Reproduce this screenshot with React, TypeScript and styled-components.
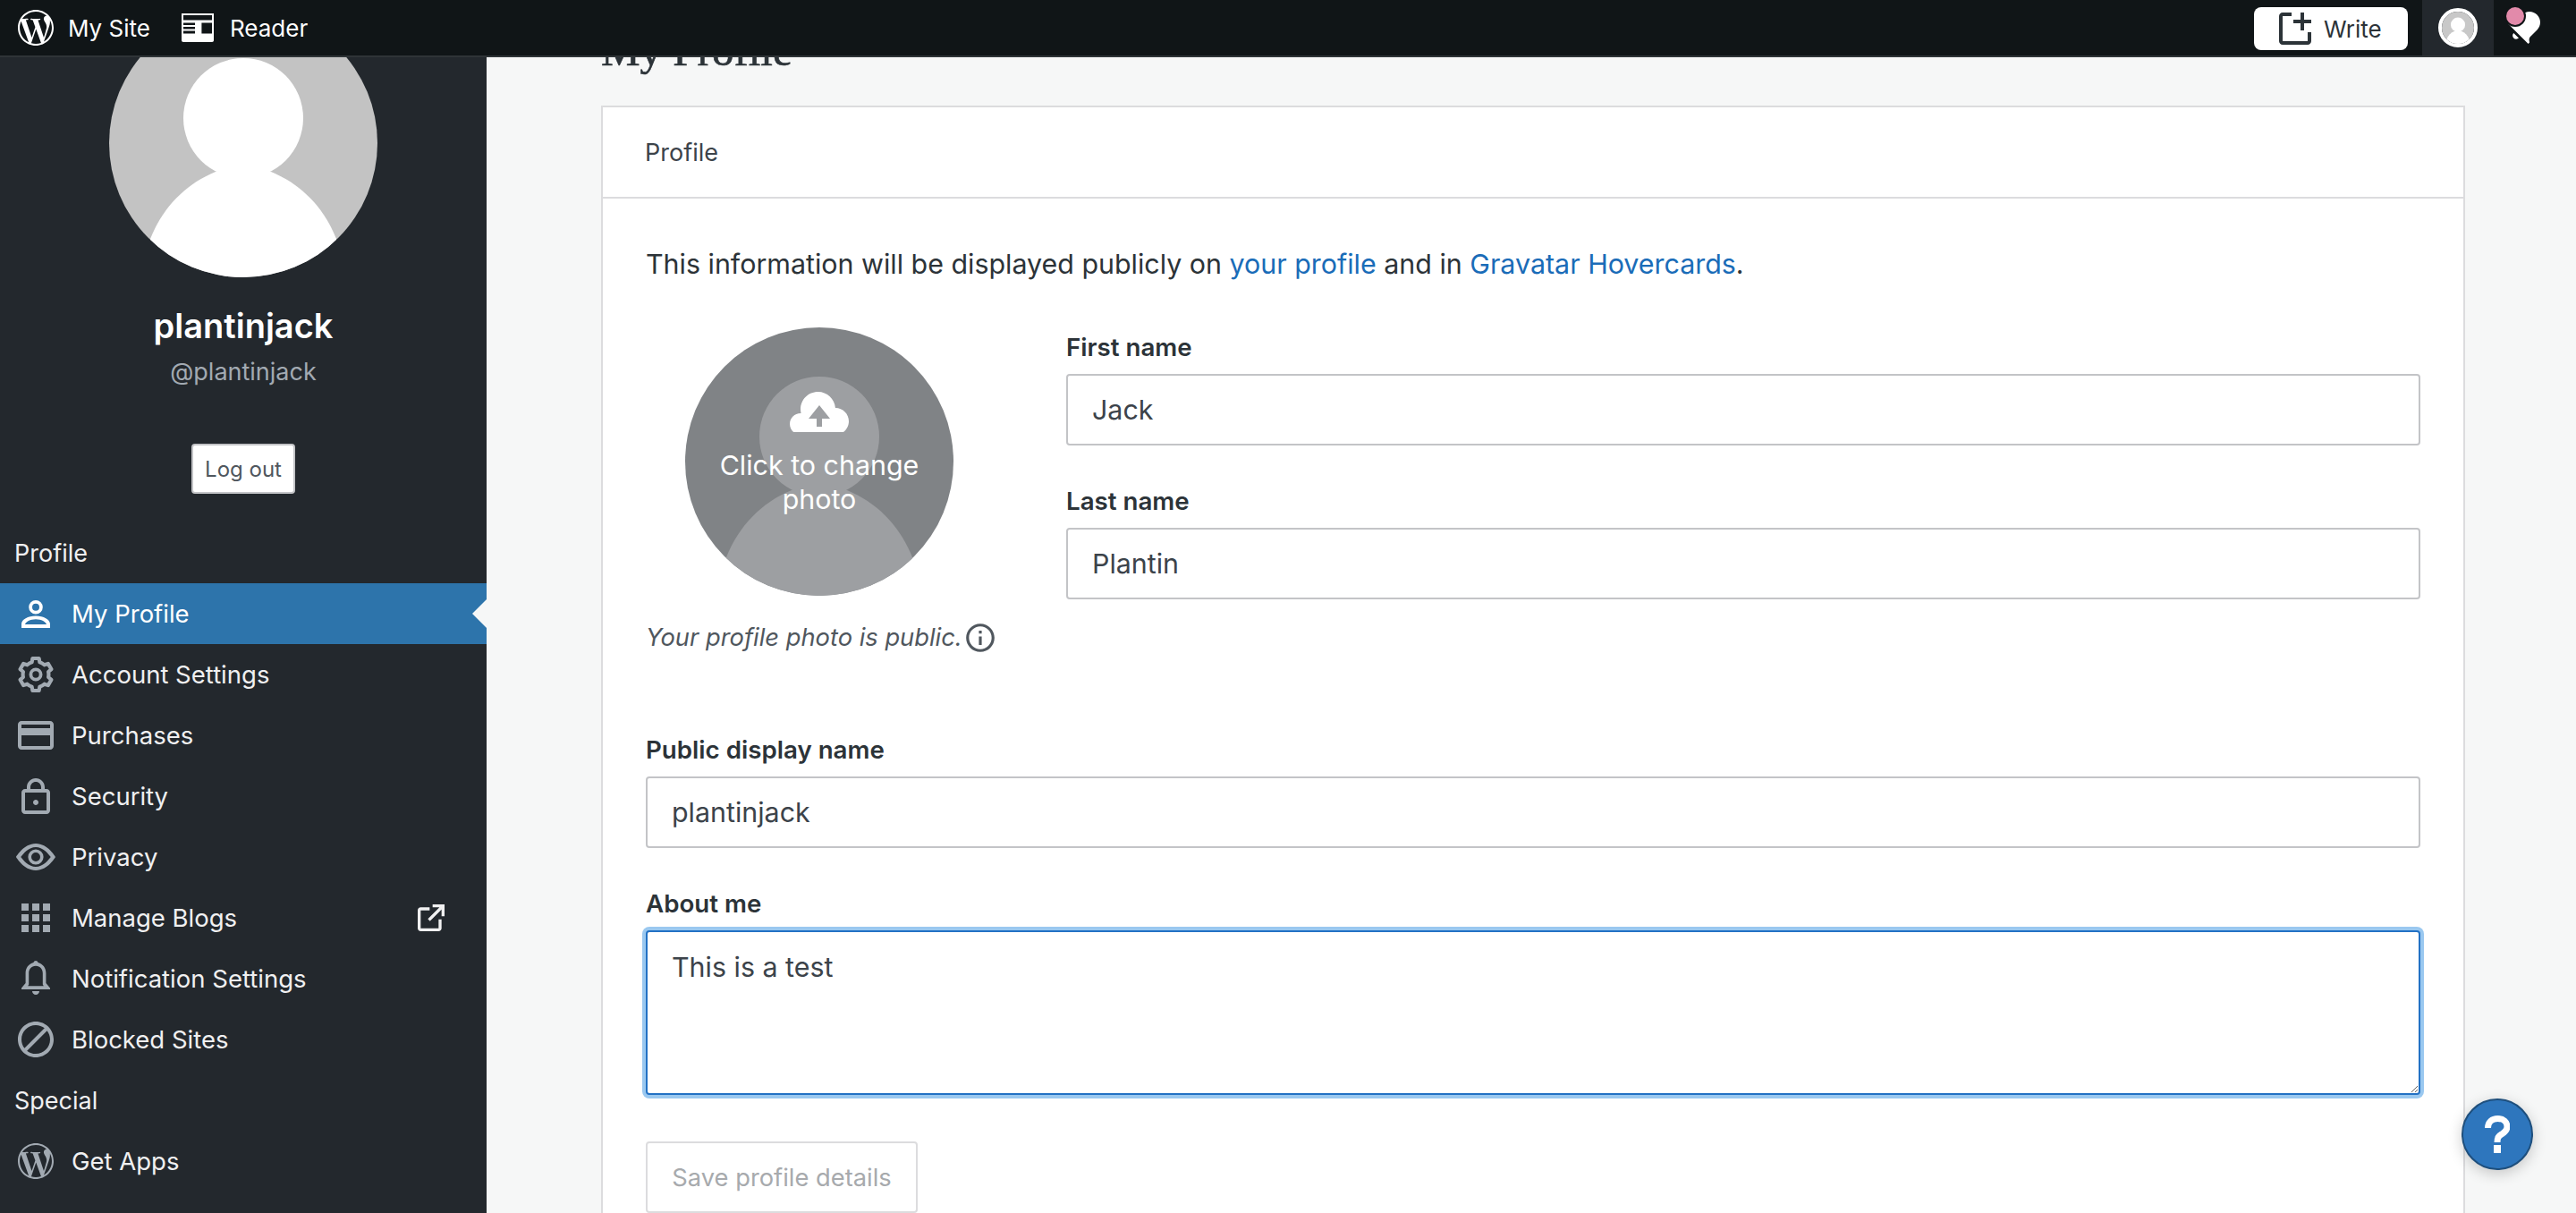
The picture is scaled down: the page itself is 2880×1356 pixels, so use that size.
import React from 'react';
import styled, {createGlobalStyle} from 'styled-components';
import {SiWordpress} from 'react-icons/si';

const GlobalStyle = createGlobalStyle`
  html, body {
    margin: 0;
    padding: 0;
    background-color: #f6f7f7;
    font-family: Inter, "Liberation Sans", sans-serif;
  }
  * {
    box-sizing: border-box;
  }
`;

const Icon = ({size = 48, children}: {size?: number; children: React.ReactNode}) => (
    <svg width={size} height={size} viewBox='0 0 24 24' fill='currentColor' style={{display: 'block', flexShrink: 0}}>
        {children}
    </svg>
);

const GEAR = 'M20 12c0-.568-.061-1.122-.174-1.656l1.834-1.612-2-3.464-2.322.786c-.828-.747-1.811-1.326-2.896-1.676L14 2h-4l-.442 2.378c-1.085.35-2.068.929-2.896 1.676l-2.322-.786-2 3.464 1.834 1.612C4.061 10.878 4 11.432 4 12s.061 1.122.174 1.656L2.34 15.268l2 3.464 2.322-.786c.828.747 1.811 1.326 2.896 1.676L10 22h4l.442-2.378c1.085-.35 2.068-.929 2.896-1.676l2.322.786 2-3.464-1.834-1.612C19.939 13.122 20 12.568 20 12z';

const UserIcon = () => (
    <Icon>
        <path fillRule='evenodd' d='M12 4.500a3.900 3.900 0 1 0 0 7.800 3.900 3.900 0 0 0 0-7.800zm0 1.900a2 2 0 1 1 0 4 2 2 0 0 1 0-4z'/>
        <path fillRule='evenodd' d='M4 20v-2.200c0-2.600 3.600-4.600 8-4.600s8 2 8 4.600V20H4zm2-2h12c-.3-1.500-2.900-2.900-6-2.900S6.300 16.500 6 18z'/>
    </Icon>
);

const CogIcon = () => (
    <Icon>
        <g transform='translate(12 12) scale(.9) translate(-12 -12)'>
            <path d={GEAR} fill='none' stroke='currentColor' strokeWidth='2.3' strokeLinejoin='round'/>
        </g>
        <circle cx='12' cy='12' r='2.800' fill='none' stroke='currentColor' strokeWidth='1.900'/>
    </Icon>
);

const CardIcon = () => (
    <Icon>
        <path d='M20 4H4c-1.105 0-2 .895-2 2v12c0 1.105.895 2 2 2h16c1.105 0 2-.895 2-2V6c0-1.105-.895-2-2-2zm0 14H4v-6h16v6zm0-10H4V6h16v2z'/>
    </Icon>
);

const LockIcon = () => (
    <Icon>
        <path d='M18 8h-1V7c0-2.757-2.243-5-5-5S7 4.243 7 7v1H6c-1.105 0-2 .895-2 2v10c0 1.105.895 2 2 2h12c1.105 0 2-.895 2-2V10c0-1.105-.895-2-2-2zM9 7c0-1.654 1.346-3 3-3s3 1.346 3 3v1H9V7zm9 13H6V10h12v10zm-6-3c.828 0 1.500-.672 1.500-1.500S12.828 14 12 14s-1.500.672-1.500 1.500.672 1.500 1.500 1.500z'/>
    </Icon>
);

const EyeIcon = () => (
    <Icon>
        <g transform='translate(0 12) scale(1 1.25) translate(0 -12)'>
            <path fillRule='evenodd' d='M12 6C5.188 6 1 12 1 12s4.188 6 11 6 11-6 11-6-4.188-6-11-6zm0 10.400c-3.943 0-6.926-2.884-8.379-4.400C5.074 10.484 8.057 7.600 12 7.600s6.926 2.884 8.379 4.400c-1.453 1.516-4.436 4.400-8.379 4.400z'/>
        </g>
        <circle cx='12' cy='12' r='3.400' fill='none' stroke='currentColor' strokeWidth='1.800'/>
    </Icon>
);

const GridIcon = () => (
    <Icon>
        <path d='M4 4h4v4H4zM10 4h4v4h-4zM16 4h4v4h-4zM4 10h4v4H4zM10 10h4v4h-4zM16 10h4v4h-4zM4 16h4v4H4zM10 16h4v4h-4zM16 16h4v4h-4z'/>
    </Icon>
);

const BellIcon = () => (
    <Icon>
        <path fillRule='evenodd' d='M12 2a1.400 1.400 0 0 0-1.300 1C8 3.800 6.300 6 6.300 9v5.500L4 17.200V18h16v-.8l-2.300-2.700V9c0-3-1.700-5.200-4.400-6A1.400 1.400 0 0 0 12 2zm0 2.900c2.500 0 3.900 1.900 3.900 4.100v6.200l.5.900H7.600l.5-.9V9c0-2.200 1.400-4.100 3.900-4.100z'/>
        <path d='M10 19h4c0 1-.9 2-2 2s-2-1-2-2z'/>
    </Icon>
);

const BlockIcon = () => (
    <Icon>
        <path d='M12 2C6.477 2 2 6.477 2 12s4.477 10 10 10 10-4.477 10-10S17.523 2 12 2zM4 12c0-4.418 3.582-8 8-8 1.848 0 3.545.633 4.900 1.686L5.686 16.900C4.633 15.545 4 13.848 4 12zm8 8c-1.848 0-3.546-.633-4.900-1.686L18.314 7.100C19.367 8.455 20 10.152 20 12c0 4.418-3.582 8-8 8z'/>
    </Icon>
);

const ExternalIcon = () => (
    <Icon size={40}>
        <path d='M19 13v6c0 1.105-.895 2-2 2H5c-1.105 0-2-.895-2-2V7c0-1.105.895-2 2-2h6v2H5v12h12v-6h2zM13 3v2h4.586l-7.793 7.793 1.414 1.414L19 6.414V11h2V3h-8z'/>
    </Icon>
);

const ReaderIcon = () => (
    <Icon>
        <path d='M3 4h18v15c0 .6-.4 1-1 1H4c-.6 0-1-.4-1-1V4z'/>
        <path fill='#101517' d='M4 5h16v2.800H4zM4 9.200h6.500v1.300H4zM4 11.500h6.500v1.300H4zM4 13.800h6.500v1.400H4zM14.200 9.200H20v6h-5.800z'/>
    </Icon>
);

const WriteIcon = () => (
    <Icon>
        <path d='M21 14v5c0 1.105-.895 2-2 2H5c-1.105 0-2-.895-2-2V5c0-1.105.895-2 2-2h5v2H5v14h14v-5h2zM21 7h-4V3h-2v4h-4v2h4v4h2V9h4V7z'/>
    </Icon>
);

const NotificationIcon = () => (
    <Icon>
        <path d='M6.140 14.970l2.828 2.827c-.362.362-.862.586-1.414.586-1.105 0-2-.895-2-2 0-.552.224-1.052.586-1.414zm8.867 5.324L14.300 21 3 9.700l.706-.707 1.102.157c.754.108 1.690-.122 2.077-.510l3.885-3.884c2.340-2.340 6.135-2.340 8.475 0s2.340 6.135 0 8.475l-3.885 3.886c-.388.388-.618 1.323-.510 2.077l.157 1.100z'/>
    </Icon>
);

const CloudIcon = () => (
    <Icon size={72}>
        <path fillRule='evenodd' d='M18 9h-.025C17.720 5.646 14.922 3 11.500 3 7.910 3 5 5.910 5 9.500c0 .524.069 1.031.186 1.519C5.123 11.016 5.064 11 5 11c-2.209 0-4 1.791-4 4 0 1.202.541 2.267 1.380 3h18.593C22.196 17.089 23 15.643 23 14c0-2.761-2.239-5-5-5zm-5 4v3h-2v-3H8l4-5 4 5h-3z'/>
    </Icon>
);

const InfoIcon = () => (
    <Icon size={38}>
        <path d='M12 2C6.477 2 2 6.477 2 12s4.477 10 10 10 10-4.477 10-10S17.523 2 12 2zm0 18c-4.411 0-8-3.589-8-8s3.589-8 8-8 8 3.589 8 8-3.589 8-8 8zM11 11h2v6h-2zM11 7h2v2h-2z'/>
    </Icon>
);

const MysteryMan = ({back, front}: {back: string; front: string}) => (
    <svg width='100%' height='100%' viewBox='0 0 300 300' style={{display: 'block'}}>
        <rect width='300' height='300' fill={back}/>
        <circle cx='150' cy='122' r='67' fill={front}/>
        <path d='M46 257C60 222 85 196 119 182H181C215 196 240 222 254 257V300H46Z' fill={front}/>
    </svg>
);

interface NavItem {
    label: string;
    icon: React.ReactNode;
    active?: boolean;
    external?: boolean;
}

const PROFILE_ITEMS: NavItem[] = [
    {label: 'My Profile', icon: <UserIcon/>, active: true},
    {label: 'Account Settings', icon: <CogIcon/>},
    {label: 'Purchases', icon: <CardIcon/>},
    {label: 'Security', icon: <LockIcon/>},
    {label: 'Privacy', icon: <EyeIcon/>},
    {label: 'Manage Blogs', icon: <GridIcon/>, external: true},
    {label: 'Notification Settings', icon: <BellIcon/>},
    {label: 'Blocked Sites', icon: <BlockIcon/>},
];

const SideItem = ({item}: {item: NavItem}) => (
    <SideRow $active={item.active}>
        <SideIcon $active={item.active}>{item.icon}</SideIcon>
        <SideLabel>{item.label}</SideLabel>
        {item.external && <SideExternal><ExternalIcon/></SideExternal>}
        {item.active && <SideCaret/>}
    </SideRow>
);

const App = () => {
    return (
        <Page>
            <GlobalStyle/>
            <MasterBar>
                <BarGroup>
                    <BarItem $first>
                        <LogoBox><SiWordpress size={40}/></LogoBox>
                        My Site
                    </BarItem>
                    <BarItem>
                        <ReaderIcon/>
                        Reader
                    </BarItem>
                </BarGroup>
                <BarGroup>
                    <WriteButton><WriteIcon/>Write</WriteButton>
                    <BarAvatarCell>
                        <BarAvatar><MysteryMan back='#c8c8c8' front='#ffffff'/></BarAvatar>
                    </BarAvatarCell>
                    <BarBell>
                        <NotificationIcon/>
                        <BellDot/>
                    </BarBell>
                </BarGroup>
            </MasterBar>
            <Body>
                <Sidebar>
                    <SideAvatar><MysteryMan back='#c3c3c3' front='#ffffff'/></SideAvatar>
                    <SideName>plantinjack</SideName>
                    <SideHandle>@plantinjack</SideHandle>
                    <LogoutButton>Log out</LogoutButton>
                    <SideHeading>Profile</SideHeading>
                    {PROFILE_ITEMS.map((item) => <SideItem key={item.label} item={item}/>)}
                    <SideHeading>Special</SideHeading>
                    <SideItem item={{label: 'Get Apps', icon: <AppsLogo><SiWordpress size={40}/></AppsLogo>}}/>
                </Sidebar>
                <Main>
                    <PageTitle>My Profile</PageTitle>
                    <Card>
                        <CardHeader>Profile</CardHeader>
                        <CardBody>
                            <Intro>
                                This information will be displayed publicly on <Link>your profile</Link> and in <Link>Gravatar Hovercards</Link>.
                            </Intro>
                            <PhotoRow>
                                <PhotoColumn>
                                    <Photo>
                                        <MysteryMan back='#808386' front='#9d9fa2'/>
                                        <PhotoOverlay>
                                            <CloudIcon/>
                                            <PhotoText>Click to change photo</PhotoText>
                                        </PhotoOverlay>
                                    </Photo>
                                    <PhotoCaption>
                                        Your profile photo is public.
                                        <InfoIcon/>
                                    </PhotoCaption>
                                </PhotoColumn>
                                <NameColumn>
                                    <Field>
                                        <Label>First name</Label>
                                        <TextInput defaultValue='Jack'/>
                                    </Field>
                                    <Field>
                                        <Label>Last name</Label>
                                        <TextInput defaultValue='Plantin'/>
                                    </Field>
                                </NameColumn>
                            </PhotoRow>
                            <Field>
                                <Label>Public display name</Label>
                                <TextInput defaultValue='plantinjack'/>
                            </Field>
                            <Field>
                                <Label>About me</Label>
                                <TextArea defaultValue='This is a test'/>
                            </Field>
                            <SaveButton disabled>Save profile details</SaveButton>
                        </CardBody>
                    </Card>
                </Main>
            </Body>
            <HelpButton>
                <svg width='28' height='42' viewBox='0 0 28 42' style={{display: 'block'}}>
                    <path d='M3.500 14C3.500 7.500 8 3.500 14.500 3.500S25 7.500 25 12.500C25 17 22 18.800 19 20.800 15.500 23 14 24.500 14 30' fill='none' stroke='#fff' strokeWidth='7'/>
                    <rect x='10' y='33' width='8' height='9' fill='#fff'/>
                </svg>
            </HelpButton>
        </Page>
    );
};

const Page = styled.div`
  position: relative;
  width: 100%;
  height: 100vh;
  display: flex;
  flex-direction: column;
  overflow: hidden;
`;

const MasterBar = styled.header`
  height: 64px;
  flex-shrink: 0;
  display: flex;
  align-items: stretch;
  justify-content: space-between;
  background-color: #101517;
  border-bottom: 2px solid #2f3437;
  position: relative;
  z-index: 2;
`;

const BarGroup = styled.div`
  display: flex;
  align-items: stretch;
`;

const BarItem = styled.div<{ $first?: boolean }>`
  display: flex;
  align-items: center;
  gap: ${(props) => props.$first ? '16px' : '12px'};
  padding: 0 0 0 ${(props) => props.$first ? '20px' : '29px'};
  color: #ffffff;
  font-size: 26px;
  font-weight: 400;
`;

const LogoBox = styled.span`
  display: flex;
`;

const WriteButton = styled.div`
  width: 172px;
  height: 48px;
  margin: 8px 16px 0 0;
  padding-left: 22px;
  display: flex;
  align-items: center;
  gap: 8px;
  background-color: #ffffff;
  color: #2c3338;
  border-radius: 8px;
  font-size: 26px;
`;

const BarAvatarCell = styled.div`
  width: 80px;
  display: flex;
  align-items: center;
  justify-content: center;
  background-color: #23282d;
`;

const BarAvatar = styled.div`
  width: 44px;
  height: 44px;
  border: 4px solid #ffffff;
  border-radius: 50%;
  overflow: hidden;
`;

const BarBell = styled.div`
  position: relative;
  width: 92px;
  padding: 7px 0 0 10px;
  color: #ffffff;
`;

const BellDot = styled.span`
  position: absolute;
  left: 14px;
  top: 8px;
  width: 20px;
  height: 20px;
  border-radius: 50%;
  background-color: #e28aaa;
  box-shadow: 0 0 0 2px #101517;
`;

const Body = styled.div`
  flex: 1;
  min-height: 0;
  display: flex;
`;

const Sidebar = styled.nav`
  width: 544px;
  flex-shrink: 0;
  display: flex;
  flex-direction: column;
  overflow: hidden;
  background-color: #23282d;
`;

const SideAvatar = styled.div`
  width: 300px;
  height: 300px;
  margin: -54px auto 0;
  flex-shrink: 0;
  border-radius: 50%;
  overflow: hidden;
`;

const SideName = styled.div`
  margin-top: 28px;
  text-align: center;
  color: #ffffff;
  font-size: 38px;
  line-height: 52px;
  font-weight: 600;
`;

const SideHandle = styled.div`
  margin-top: 6px;
  text-align: center;
  color: #a2aab2;
  font-size: 27px;
  line-height: 40px;
`;

const LogoutButton = styled.div`
  width: 116px;
  height: 56px;
  margin: 60px auto 32px;
  flex-shrink: 0;
  display: flex;
  align-items: center;
  justify-content: center;
  background-color: #ffffff;
  border: 2px solid #c3c4c7;
  border-radius: 4px;
  color: #50575e;
  font-size: 24px;
`;

const SideHeading = styled.div`
  height: 68px;
  flex-shrink: 0;
  padding-left: 16px;
  display: flex;
  align-items: center;
  color: #f0f0f1;
  font-size: 27px;
`;

const SideRow = styled.div<{ $active?: boolean }>`
  position: relative;
  height: 68px;
  flex-shrink: 0;
  padding: 0 42px 0 16px;
  display: flex;
  align-items: center;
  gap: 16px;
  color: ${(props) => props.$active ? '#ffffff' : '#f0f0f1'};
  background-color: ${(props) => props.$active ? '#2d74ab' : 'transparent'};
  font-size: 27.5px;
`;

const SideIcon = styled.span<{ $active?: boolean }>`
  display: flex;
  width: 48px;
  height: 48px;
  align-items: center;
  justify-content: center;
  color: ${(props) => props.$active ? '#ffffff' : '#a2aab2'};
`;

const AppsLogo = styled.span`
  display: flex;
`;

const SideLabel = styled.span`
  flex: 1;
`;

const SideExternal = styled.span`
  display: flex;
  color: #f0f0f1;
`;

const SideCaret = styled.span`
  position: absolute;
  right: 0;
  top: 18px;
  width: 0;
  height: 0;
  border-style: solid;
  border-width: 16px 16px 16px 0;
  border-color: transparent #f6f7f7 transparent transparent;
`;

const Main = styled.main`
  flex: 1;
  min-width: 0;
  overflow: hidden;
  padding: 0 124px 0 128px;
  background-color: #f6f7f7;
`;

const PageTitle = styled.h1`
  margin: -35px 0 33px;
  color: #2c3338;
  font-family: "Liberation Serif", serif;
  font-size: 49px;
  line-height: 56px;
  font-weight: 400;
  -webkit-text-stroke: 0.6px #2c3338;
`;

const Card = styled.section`
  background-color: #ffffff;
  border: 2px solid #dcdcde;
`;

const CardHeader = styled.div`
  height: 102px;
  padding-left: 47px;
  display: flex;
  align-items: center;
  border-bottom: 2px solid #dcdcde;
  color: #3c434a;
  font-size: 27px;
`;

const CardBody = styled.div`
  padding: 48px 48px 48px;
`;

const Intro = styled.p`
  margin: 0 0 46px;
  color: #2c3338;
  font-size: 30.4px;
  line-height: 50px;
`;

const Link = styled.a`
  color: #1a6cb8;
`;

const PhotoRow = styled.div`
  display: grid;
  grid-template-columns: 388px 1fr;
  column-gap: 82px;
  margin-bottom: 82px;
`;

const PhotoColumn = styled.div`
  display: flex;
  flex-direction: column;
`;

const Photo = styled.div`
  position: relative;
  width: 300px;
  height: 300px;
  margin-left: 44px;
  border-radius: 50%;
  overflow: hidden;
`;

const PhotoOverlay = styled.div`
  position: absolute;
  top: 63px;
  left: 0;
  right: 0;
  display: flex;
  flex-direction: column;
  align-items: center;
  color: #ffffff;
`;

const PhotoText = styled.div`
  width: 240px;
  text-align: center;
  font-size: 30.4px;
  line-height: 38px;
`;

const PhotoCaption = styled.div`
  margin-top: 26px;
  display: flex;
  align-items: center;
  gap: 1px;
  color: #50575e;
  font-size: 27.3px;
  line-height: 42px;
  font-style: italic;
  white-space: nowrap;
`;

const NameColumn = styled.div`
  min-width: 0;
`;

const Field = styled.div`
  margin-bottom: 40px;

  ${NameColumn} &:last-child {
    margin-bottom: 0;
  }
`;

const Label = styled.label`
  display: block;
  margin-bottom: 8px;
  color: #2c3338;
  font-size: 27.7px;
  line-height: 44px;
  font-weight: 600;
`;

const TextInput = styled.input`
  display: block;
  width: 100%;
  height: 80px;
  padding: 0 27px;
  background-color: #ffffff;
  border: 2px solid #c3c4c7;
  border-radius: 4px;
  color: #3c434a;
  font-family: Inter, "Liberation Sans", sans-serif;
  font-size: 30.4px;
  outline: none;
`;

const TextArea = styled.textarea`
  display: block;
  width: 100%;
  height: 184px;
  padding: 17px 27px;
  background-color: #ffffff;
  border: 2px solid #2271c4;
  border-radius: 4px;
  box-shadow: 0 0 0 4px #9ac8f0;
  color: #3c434a;
  font-family: Inter, "Liberation Sans", sans-serif;
  font-size: 30.4px;
  line-height: 44px;
  outline: none;
`;

const SaveButton = styled.button`
  display: block;
  width: 304px;
  height: 80px;
  margin-top: 52px;
  padding: 0;
  background-color: #ffffff;
  border: 2px solid #dcdcde;
  border-radius: 4px;
  color: #a7aaad;
  font-family: Inter, "Liberation Sans", sans-serif;
  font-size: 27.3px;
`;

const HelpButton = styled.div`
  position: absolute;
  right: 48px;
  bottom: 48px;
  width: 80px;
  height: 80px;
  display: flex;
  align-items: center;
  justify-content: center;
  border: 2px solid #1e4f7d;
  border-radius: 50%;
  background-color: #2e76bd;
  box-shadow: 0 4px 16px rgba(0, 0, 0, 0.2);
  z-index: 3;
`;

export default App;
